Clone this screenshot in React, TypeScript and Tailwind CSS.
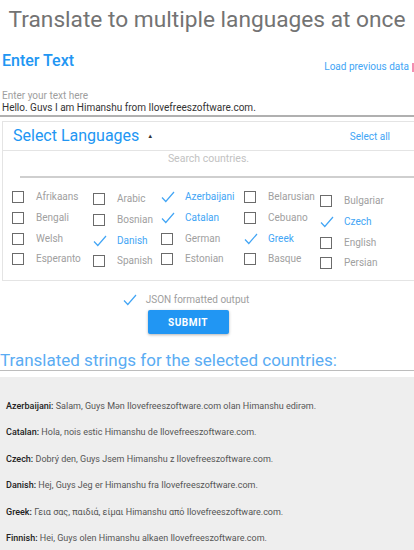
import React from "react";

type Lang = { name: string; checked?: boolean };

const columns: { width: string; offset: string; items: Lang[] }[] = [
  {
    width: "w-[81px]",
    offset: "mt-0",
    items: [{ name: "Afrikaans" }, { name: "Bengali" }, { name: "Welsh" }, { name: "Esperanto" }],
  },
  {
    width: "w-[68px]",
    offset: "mt-[2px]",
    items: [{ name: "Arabic" }, { name: "Bosnian" }, { name: "Danish", checked: true }, { name: "Spanish" }],
  },
  {
    width: "w-[83px]",
    offset: "mt-0",
    items: [
      { name: "Azerbaijani", checked: true },
      { name: "Catalan", checked: true },
      { name: "German" },
      { name: "Estonian" },
    ],
  },
  {
    width: "w-[76px]",
    offset: "mt-0",
    items: [{ name: "Belarusian" }, { name: "Cebuano" }, { name: "Greek", checked: true }, { name: "Basque" }],
  },
  {
    width: "w-[90px]",
    offset: "mt-[4px]",
    items: [{ name: "Bulgariar" }, { name: "Czech", checked: true }, { name: "English" }, { name: "Persian" }],
  },
];

const results: [string, string][] = [
  ["Azerbaijani", "Salam, Guys Mən Ilovefreeszoftware.com olan Himanshu edirəm."],
  ["Catalan", "Hola, nois estic Himanshu de Ilovefreeszoftware.com."],
  ["Czech", "Dobrý den, Guys Jsem Himanshu z Ilovefreeszoftware.com."],
  ["Danish", "Hej, Guys Jeg er Himanshu fra Ilovefreeszoftware.com."],
  ["Greek", "Γεια σας, παιδιά, είμαι Himanshu από Ilovefreeszoftware.com."],
  ["Finnish", "Hei, Guys olen Himanshu alkaen Ilovefreeszoftware.com."],
];

function Check() {
  return (
    <svg width="14" height="12" viewBox="0 0 14 12" className="shrink-0">
      <polyline points="1,6.5 4.8,10.5 13,1" fill="none" stroke="#42a5f5" strokeWidth="1.2" />
    </svg>
  );
}

function Box() {
  return <div className="w-[12px] h-[12px] border-[1.5px] border-[#6b6b6b] shrink-0 mr-[2px]" />;
}

export default function App() {
  return (
    <div className="w-[414px] h-[550px] overflow-hidden bg-white font-['Roboto',sans-serif] flex flex-col">
      <h1 className="text-[22.7px] leading-[30px] text-[#737373] text-center pt-[5px] whitespace-nowrap">
        Translate to multiple languages at once
      </h1>

      <div className="flex items-end justify-between mt-[16px] h-[20px]">
        <div className="pl-[2px] text-[16px] leading-[20px] font-medium text-[#2196f3]">Enter Text</div>
        <div className="flex items-center gap-[3px] mb-[-2px]">
          <span className="text-[10px] text-[#42a5f5] leading-[12px]">Load previous data</span>
          <span className="w-[2px] h-[9px] bg-[#f48fb1]" />
        </div>
      </div>

      <div className="mt-[19px] pl-[2px] text-[10px] leading-[11px] text-[#9e9e9e]">Enter your text here</div>
      <div className="pl-[2px] text-[10px] leading-[13px] text-[#333]">
        Hello. Guvs I am Himanshu from Ilovefreeszoftware.com.
      </div>
      <div className="h-[2px] bg-[#b0b0b0] mt-[1px]" />

      <div className="ml-[2px] mt-[4px] border-l border-t border-b border-[#e4e4e4] h-[160px] flex flex-col">
        <div className="h-[29px] flex items-center justify-between pl-[10px] pr-[24px] border-b border-[#e4e4e4]">
          <div className="flex items-center gap-[8px]">
            <span className="text-[16px] leading-[20px] text-[#2196f3]">Select Languages</span>
            <span className="text-[6px] text-[#333] mt-[-1px]">▲</span>
          </div>
          <span className="text-[10px] text-[#42a5f5]">Select all</span>
        </div>
        <div className="text-center text-[10.5px] leading-[12px] text-[#c2c2c2] mt-[2px]">Search countries.</div>
        <div className="ml-[17px] mt-[11px] h-[2px] bg-[#cfcfcf]" />
        <div className="flex pl-[9px] mt-[9px]">
          {columns.map((col, ci) => (
            <div key={ci} className={`${col.width} ${col.offset} flex flex-col`}>
              {col.items.map((it) => (
                <div key={it.name} className="h-[20.7px] flex items-center gap-[10px]">
                  {it.checked ? <Check /> : <Box />}
                  <span
                    className={`text-[10px] leading-[12px] whitespace-nowrap ${
                      it.checked ? "text-[#42a5f5]" : "text-[#a0a0a0]"
                    }`}
                  >
                    {it.name}
                  </span>
                </div>
              ))}
            </div>
          ))}
        </div>
      </div>

      <div className="flex items-center justify-center gap-[9px] mt-[13px] h-[12px] pr-[42px]">
        <Check />
        <span className="text-[10px] leading-[12px] text-[#9e9e9e]">JSON formatted output</span>
      </div>
      <div className="flex justify-center mt-[4px]">
        <button className="w-[81px] h-[24px] bg-[#2196f3] text-white text-[10px] font-bold tracking-[0.5px] rounded-[2px] shadow-[0_1px_3px_rgba(0,0,0,0.3)] ml-[-38px]">
          SUBMIT
        </button>
      </div>

      <div className="mt-[16px] text-[17px] leading-[20px] text-[#5aacf3] whitespace-nowrap">
        Translated strings for the selected countries:
      </div>
      <div className="h-[1px] bg-[#bdbdbd]" />

      <div className="mt-[6px] flex-1 bg-[#eeeeee] pt-[23px] pl-[6px] flex flex-col gap-[14.4px]">
        {results.map(([k, v]) => (
          <div key={k} className="text-[9px] leading-[12px] text-[#555] whitespace-nowrap">
            <span className="font-medium text-[#222]">{k}:</span> {v}
          </div>
        ))}
      </div>
    </div>
  );
}
